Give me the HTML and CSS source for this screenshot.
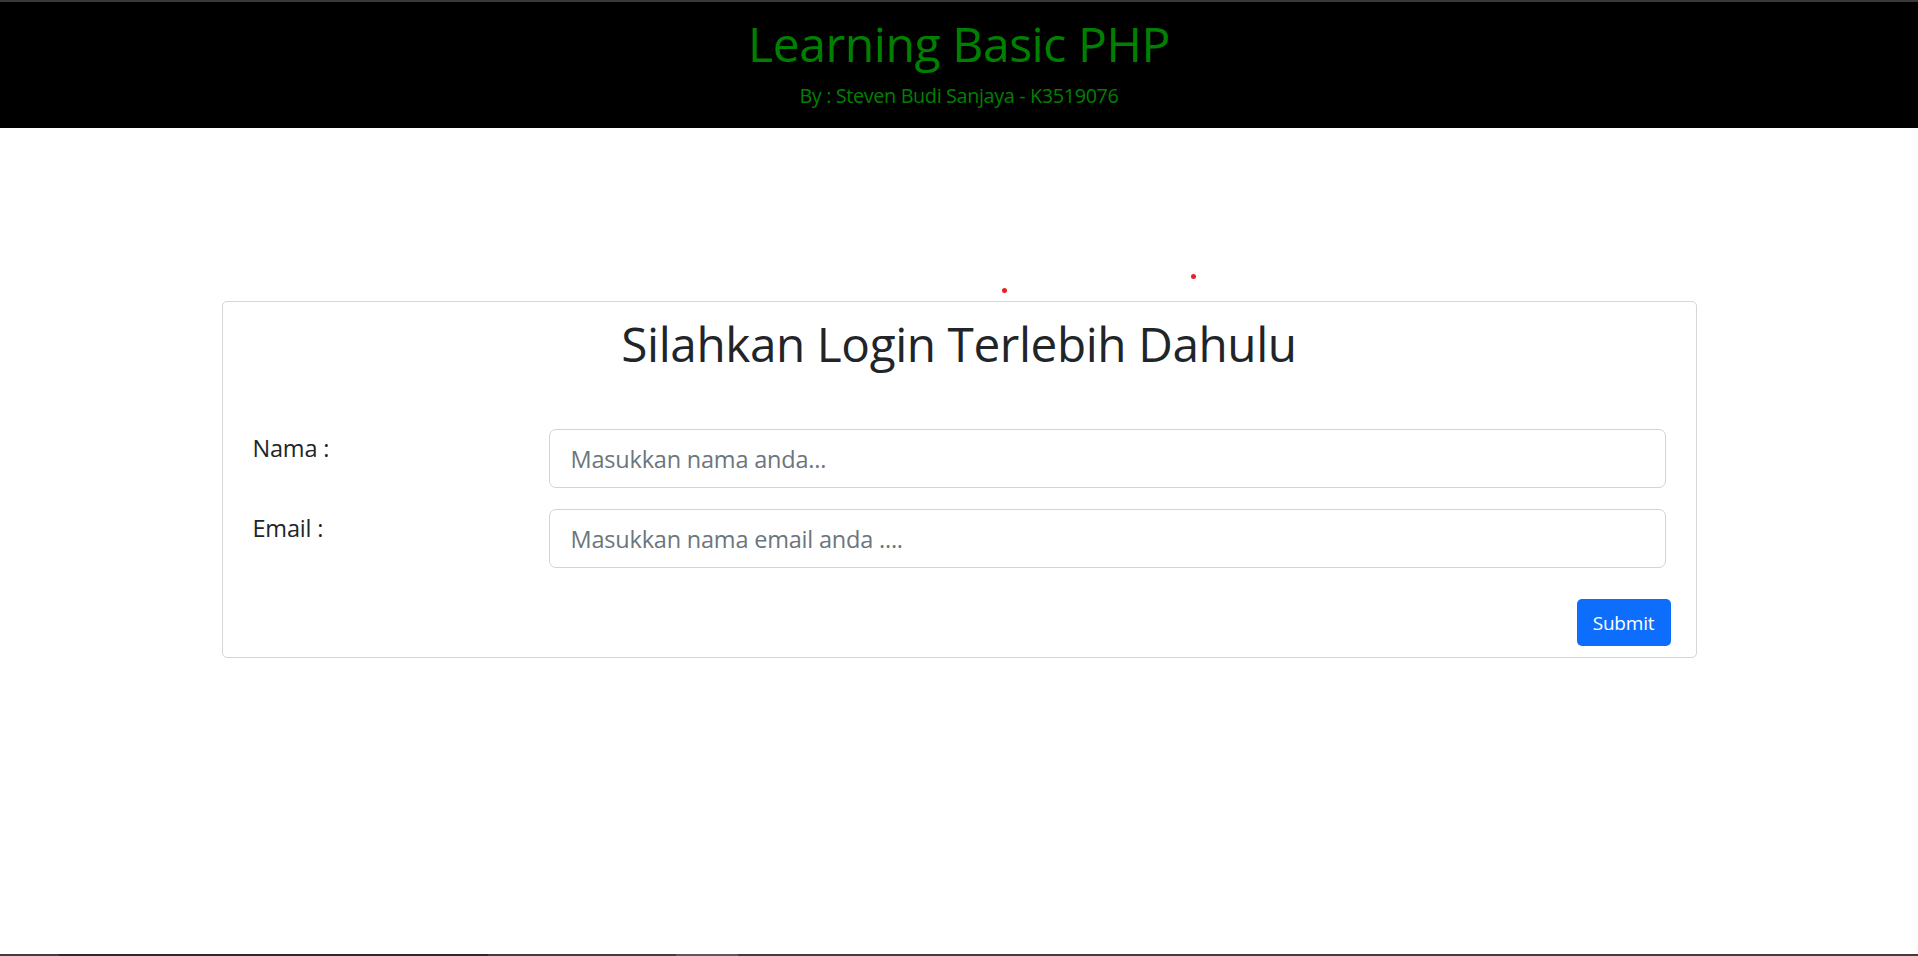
FILE: index.html
```html
<!DOCTYPE html>
<html lang="id">
<head>
<meta charset="utf-8">
<title>Learning Basic PHP</title>
<link rel="stylesheet" href="styles.css">
</head>
<body>
<div class="topline"></div>
<header class="site-header">
  <h1 class="site-title">Learning Basic PHP</h1>
  <p class="site-sub">By : Steven Budi Sanjaya - K3519076</p>
</header>
<main class="main">
  <section class="card">
    <h2 class="card-title">Silahkan Login Terlebih Dahulu</h2>
    <form class="login-form" onsubmit="return false">
      <div class="form-row">
        <label class="form-label" for="nama">Nama :</label>
        <input class="form-input" id="nama" type="text" placeholder="Masukkan nama anda...">
      </div>
      <div class="form-row">
        <label class="form-label" for="email">Email :</label>
        <input class="form-input" id="email" type="text" placeholder="Masukkan nama email anda ....">
      </div>
      <div class="form-actions">
        <button class="btn-submit" type="submit">Submit</button>
      </div>
    </form>
  </section>
</main>
<span class="dot dot-a"></span>
<span class="dot dot-b"></span>
<div class="bottombar">
  <span class="seg seg-dark"></span>
  <span class="seg seg-gap"></span>
  <span class="seg seg-light"></span>
</div>
</body>
</html>
```
FILE: styles.css
```css
* { box-sizing: border-box; }
html, body { margin: 0; padding: 0; }
body {
  font-family: "Open Sans", "Noto Sans", sans-serif;
  background: #ffffff;
  color: #212529;
  height: 956px;
  overflow: hidden;
  position: relative;
}
.topline { height: 2px; background: #3a3a3a; }
.site-header {
  background: #000;
  height: 126px;
  text-align: center;
  padding-top: 12px;
}
.site-title {
  margin: 0;
  font-weight: 400;
  font-size: 48px;
  line-height: 60px;
  color: #008000;
  letter-spacing: -0.4px;
}
.site-sub {
  margin: 7px 0 0;
  font-size: 19.8px;
  line-height: 30px;
  color: #008000;
  letter-spacing: -0.35px;
}
.main { padding-top: 173px; }
.dot {
  position: absolute;
  width: 5px;
  height: 5px;
  border-radius: 50%;
  background: #e8202a;
}
.dot-a { left: 1002px; top: 288px; }
.dot-b { left: 1191px; top: 274px; }
.card {
  width: 1475px;
  margin: 0 auto;
  border: 1px solid #d3d6da;
  border-radius: 5px;
  padding: 12px 30px 11px 30px;
}
.card-title {
  margin: 0;
  text-align: center;
  font-weight: 400;
  font-size: 47.7px;
  line-height: 60px;
  letter-spacing: -0.4px;
  color: #212529;
}
.login-form { margin-top: 55px; }
.form-row {
  display: flex;
  align-items: flex-start;
  margin-bottom: 21px;
}
.form-label {
  width: 296px;
  flex: none;
  font-size: 23.5px;
  line-height: 37px;
  padding-top: 1px;
  color: #212529;
  letter-spacing: -0.2px;
}
.form-input {
  flex: 1;
  height: 59px;
  border: 1px solid #ced4da;
  border-radius: 7px;
  padding: 0 21px;
  font-family: "Open Sans", "Noto Sans", sans-serif;
  font-size: 23.5px;
  color: #212529;
  background: #fff;
  outline: none;
  letter-spacing: -0.2px;
}
.form-input::placeholder { color: #6c757d; opacity: 1; }
.form-actions {
  display: flex;
  justify-content: flex-end;
  margin-top: 31px;
  margin-right: -5px;
}
.btn-submit {
  width: 94px;
  height: 47px;
  border: none;
  border-radius: 5px;
  background: #0d6efd;
  color: #fff;
  font-family: "Open Sans", "Noto Sans", sans-serif;
  font-size: 19px;
  padding: 0;
  letter-spacing: -0.2px;
}
.bottombar {
  position: absolute;
  left: 0;
  right: 0;
  bottom: 0;
  height: 2px;
  background: #3e3e3e;
  display: flex;
}
.seg { display: block; height: 2px; }
.seg-dark { margin-left: 59px; width: 429px; background: #2a2a2a; }
.seg-gap { width: 188px; }
.seg-light { width: 62px; background: #5a5a5a; }
```
